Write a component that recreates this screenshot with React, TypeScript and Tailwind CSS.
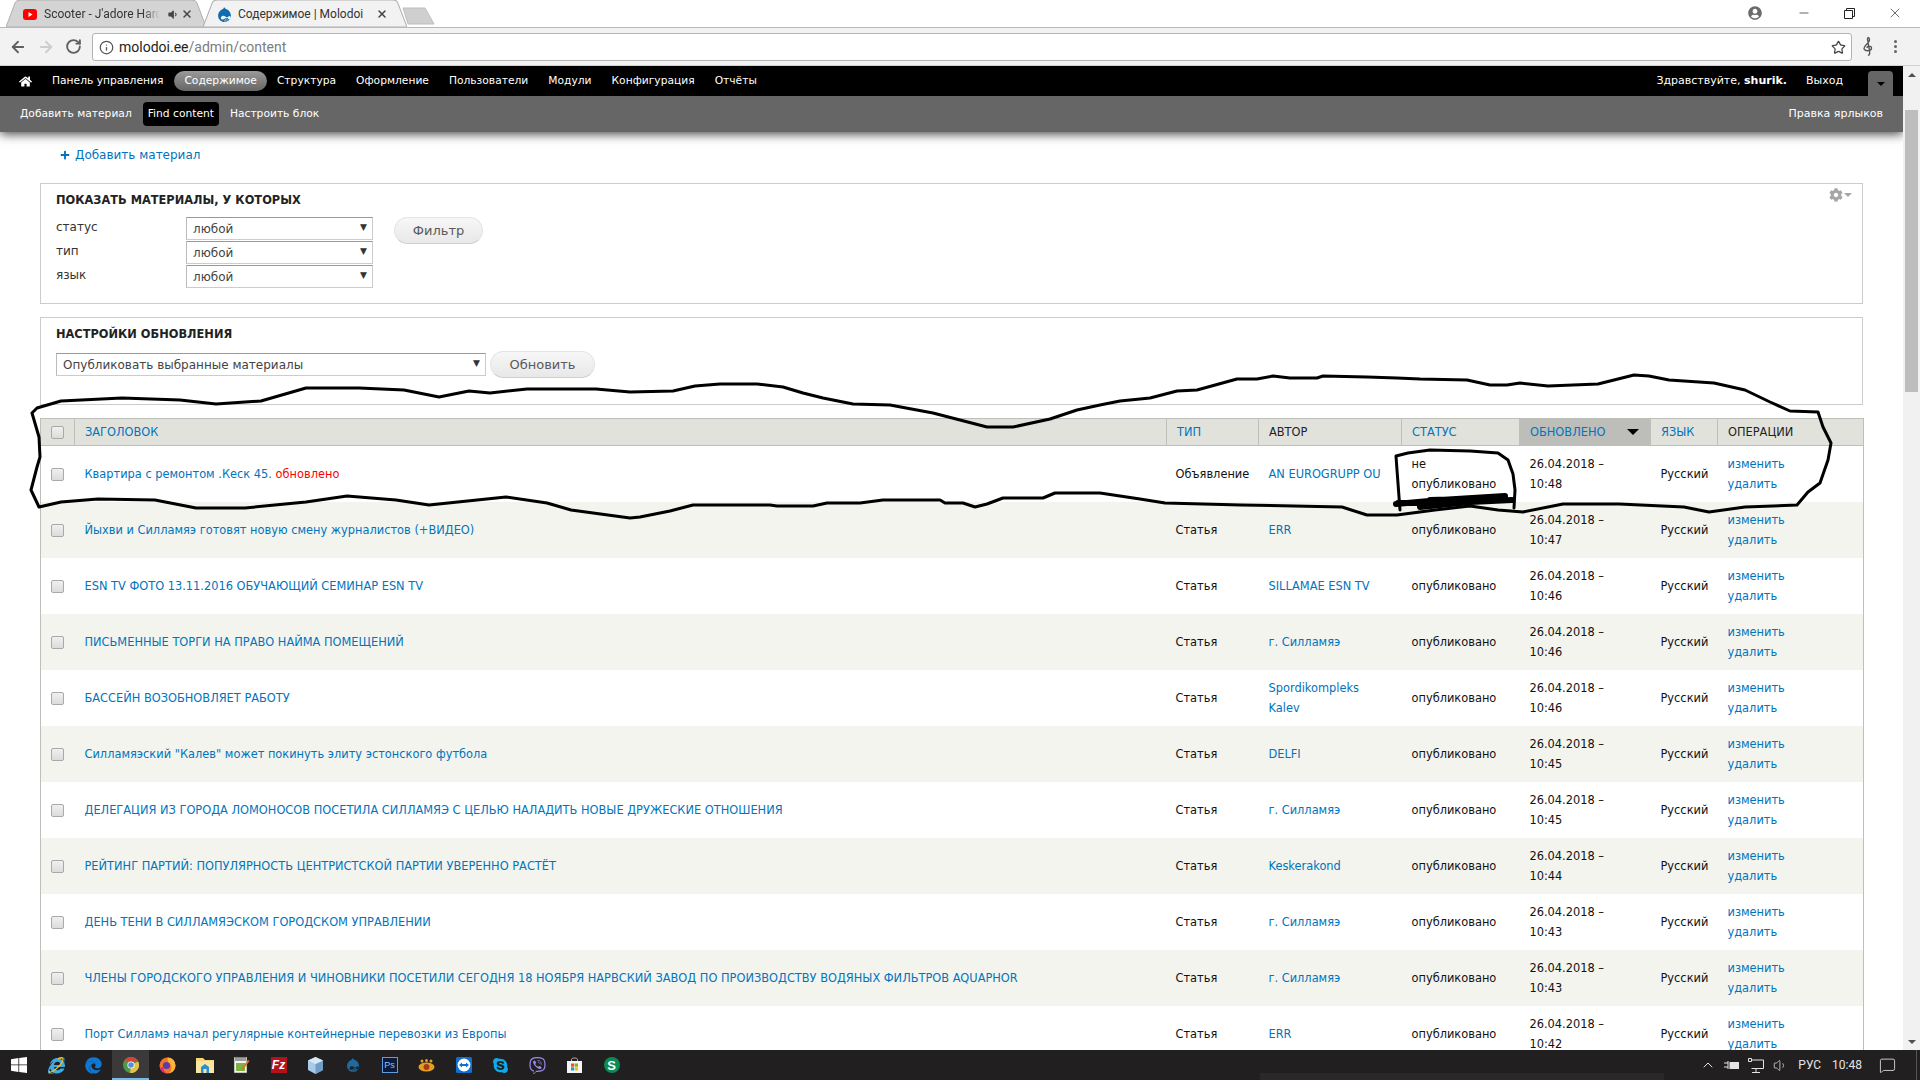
import React from 'react';
import { ArrowLeft, ArrowRight, RotateCw, Info, Star, X, Minus, ChevronUp, Volume1, MessageSquare } from 'lucide-react';
import { FaHome, FaPlus, FaCog, FaUserCircle, FaVolumeDown, FaInternetExplorer, FaEdge, FaDrupal, FaSkype, FaViber } from 'react-icons/fa';

const rows = [
  { title: 'Квартира с ремонтом .Кеск 45.', fresh: true, type: 'Объявление', author: 'AN EUROGRUPP OU', time: '10:48', off: true },
  { title: 'Йыхви и Силламяэ готовят новую смену журналистов (+ВИДЕО)', type: 'Статья', author: 'ERR', time: '10:47' },
  { title: 'ESN TV ФОТО 13.11.2016 ОБУЧАЮЩИЙ СЕМИНАР ESN TV', type: 'Статья', author: 'SILLAMAE ESN TV', time: '10:46' },
  { title: 'ПИСЬМЕННЫЕ ТОРГИ НА ПРАВО НАЙМА ПОМЕЩЕНИЙ', type: 'Статья', author: 'г. Силламяэ', time: '10:46' },
  { title: 'БАССЕЙН ВОЗОБНОВЛЯЕТ РАБОТУ', type: 'Статья', author: 'Spordikompleks Kalev', time: '10:46' },
  { title: 'Силламяэский "Калев" может покинуть элиту эстонского футбола', type: 'Статья', author: 'DELFI', time: '10:45' },
  { title: 'ДЕЛЕГАЦИЯ ИЗ ГОРОДА ЛОМОНОСОВ ПОСЕТИЛА СИЛЛАМЯЭ С ЦЕЛЬЮ НАЛАДИТЬ НОВЫЕ ДРУЖЕСКИЕ ОТНОШЕНИЯ', type: 'Статья', author: 'г. Силламяэ', time: '10:45' },
  { title: 'РЕЙТИНГ ПАРТИЙ: ПОПУЛЯРНОСТЬ ЦЕНТРИСТСКОЙ ПАРТИИ УВЕРЕННО РАСТЁТ', type: 'Статья', author: 'Keskerakond', time: '10:44' },
  { title: 'ДЕНЬ ТЕНИ В СИЛЛАМЯЭСКОМ ГОРОДСКОМ УПРАВЛЕНИИ', type: 'Статья', author: 'г. Силламяэ', time: '10:43' },
  { title: 'ЧЛЕНЫ ГОРОДСКОГО УПРАВЛЕНИЯ И ЧИНОВНИКИ ПОСЕТИЛИ СЕГОДНЯ 18 НОЯБРЯ НАРВСКИЙ ЗАВОД ПО ПРОИЗВОДСТВУ ВОДЯНЫХ ФИЛЬТРОВ AQUAPHOR', type: 'Статья', author: 'г. Силламяэ', time: '10:43' },
  { title: 'Порт Силламэ начал регулярные контейнерные перевозки из Европы', type: 'Статья', author: 'ERR', time: '10:42' },
];

const navItems = ['Оформление', 'Пользователи', 'Модули', 'Конфигурация', 'Отчёты'];

const Checkbox = () => (
  <span className="block w-[13px] h-[13px] rounded-[2px] border border-[#a9a9a9] bg-gradient-to-b from-[#f0f0f0] to-[#dcdcdc]" />
);

const FakeSelect = ({ text, width }: { text: string; width: string }) => (
  <div className={`${width} h-[23px] border border-[#ccc] border-t-[#999] border-l-[#bbb] bg-white flex items-center justify-between pl-[6px] pr-[5px] text-[12px] text-[#444]`}>
    <span>{text}</span>
    <span className="text-[9px] text-[#333] leading-none -mt-[3px]">▼</span>
  </div>
);

const PillButton = ({ text, width }: { text: string; width: string }) => (
  <div className={`${width} h-[27px] rounded-[14px] border border-[#e4e4e4] border-b-[#cfcfcf] bg-gradient-to-b from-[#f7f7f7] to-[#e8e8e8] flex items-center justify-center text-[13px] text-[#5a5a5a]`}>
    {text}
  </div>
);

const TabShape = ({ fill, stroke }: { fill: string; stroke: string }) => (
  <svg className="absolute inset-0 w-full h-full" viewBox="0 0 200 28" preserveAspectRatio="none">
    <path d="M0 28 L9 4 Q10 1 14 1 L186 1 Q190 1 191 4 L200 28 Z" fill={fill} stroke={stroke} strokeWidth="1" />
  </svg>
);

const ChromeBar = () => (
  <div className="bg-white">
    {/* tab strip */}
    <div className="h-[28px] flex items-end relative border-b border-[#b9b9b9] pl-[6px] font-['Roboto',sans-serif] text-[12px] text-[#333]">
      <div className="relative w-[200px] h-[28px] flex items-center pl-[17px] pt-[2px]">
        <TabShape fill="#d4d4d4" stroke="#b0b0b0" />
        <svg className="relative" width="14" height="11" viewBox="0 0 14 11">
          <rect width="14" height="11" rx="3" fill="#ff0000" />
          <path d="M5.5 3 L9.5 5.5 L5.5 8 Z" fill="#fff" />
        </svg>
        <span className="relative ml-[7px] w-[116px] whitespace-nowrap [mask-image:linear-gradient(to_right,#000_85%,transparent)]">Scooter - J'adore Harc</span>
        <FaVolumeDown className="relative ml-[7px] text-[#444]" size={11} />
        <X className="relative ml-[3px] text-[#444]" size={12} strokeWidth={3} />
      </div>
      <div className="relative w-[204px] h-[28px] -ml-[3px] flex items-center pl-[13px] pt-[2px]">
        <TabShape fill="#f2f2f2" stroke="#b0b0b0" />
        <FaDrupal className="relative text-[#0f6cb0]" size={17} />
        <span className="relative ml-[5px] w-[135px] whitespace-nowrap">Содержимое | Molodoi</span>
        <X className="relative ml-[3px] text-[#444]" size={12} strokeWidth={3} />
      </div>
      <svg className="absolute left-[402px] top-[7px]" width="34" height="18" viewBox="0 0 34 18">
        <path d="M1 1 L23 1 L32 17 L6 17 Z" fill="#cfcfcf" stroke="#bdbdbd" />
      </svg>
      <FaUserCircle className="absolute left-[1748px] top-[6px] text-[#6b6b6b]" size={14} />
      <Minus className="absolute left-[1797px] top-[6px] text-[#222]" size={14} strokeWidth={1.2} />
      <svg className="absolute left-[1844px] top-[8px]" width="11" height="11" viewBox="0 0 11 11" fill="none" stroke="#222">
        <path d="M0.5 2.5 H8.5 V10.5 H0.5 Z M2.5 2.5 V0.5 H10.5 V8.5 H8.5" />
      </svg>
      <X className="absolute left-[1887px] top-[5px] text-[#222]" size={16} strokeWidth={1} />
    </div>
    {/* toolbar */}
    <div className="h-[38px] bg-[#f2f2f2] border-b border-[#d0d0d0] flex items-center">
      <ArrowLeft className="ml-[9px] text-[#5f5f5f]" size={18} strokeWidth={2.4} />
      <ArrowRight className="ml-[10px] text-[#cdcdcd]" size={18} strokeWidth={2.4} />
      <RotateCw className="ml-[10px] text-[#5f5f5f]" size={17} strokeWidth={2.6} />
      <div className="ml-[10px] w-[1760px] h-[28px] bg-white border border-[#b4b4b4] rounded-[3px] flex items-center pl-[6px] pr-[5px] pt-px font-['Roboto',sans-serif] text-[14px]">
        <Info className="text-[#555]" size={15} strokeWidth={2} />
        <span className="ml-[5px] text-[#222]">molodoi.ee</span>
        <span className="text-[#7c7c7c]">/admin/content</span>
        <Star className="ml-auto text-[#444]" size={15} strokeWidth={2} />
      </div>
      <svg className="ml-[11px]" width="10" height="20" viewBox="0 0 10 20" fill="none" stroke="#555" strokeWidth="1.4">
        <path d="M5 18 C7 19 7 15 6 11 L4.5 2 C4.5 0 6.5 0 6.5 3 C6.5 6 1 8 1 11.5 C1 14.5 8.5 14.5 8.5 11 C8.5 8.5 4 8.5 4 11" />
      </svg>
      <div className="ml-[21px] flex flex-col gap-[2px]">
        <span className="w-[3px] h-[3px] rounded-full bg-[#666]" />
        <span className="w-[3px] h-[3px] rounded-full bg-[#666]" />
        <span className="w-[3px] h-[3px] rounded-full bg-[#666]" />
      </div>
    </div>
  </div>
);

const AdminBar = () => (
  <div className="relative text-white text-[10.7px]">
    <div className="h-[30px] bg-black flex items-center">
      <FaHome className="ml-[19px]" size={13} />
      <span className="ml-[20px] pt-px">Панель управления</span>
      <span className="ml-[11px] h-[20px] px-[10px] rounded-[10px] bg-gradient-to-b from-[#9a9a9a] to-[#666] flex items-center pt-px">Содержимое</span>
      <span className="ml-[10px] pt-px">Структура</span>
      {navItems.map((item) => (
        <span key={item} className="ml-[20px] pt-px">{item}</span>
      ))}
      <span className="ml-auto pt-px text-[11px]">Здравствуйте, <b>shurik.</b></span>
      <span className="ml-[19px] pt-px text-[11px]">Выход</span>
      <div className="ml-[25px] mr-[10px] mt-[5px] w-[25px] h-[25px] bg-[#666] rounded-t-[4px] flex items-center justify-center">
        <span className="w-0 h-0 border-x-[4px] border-x-transparent border-t-[4px] border-t-black" />
      </div>
    </div>
    <div className="h-[36px] bg-[#666] flex items-center pl-[20px] pr-[20px] shadow-[0_2px_10px_rgba(0,0,0,0.75)]">
      <span>Добавить материал</span>
      <span className="ml-[11px] h-[24px] px-[5px] bg-black rounded-[4px] flex items-center">Find content</span>
      <span className="ml-[11px]">Настроить блок</span>
      <span className="ml-auto text-[11px]">Правка ярлыков</span>
    </div>
  </div>
);

const Fieldset = ({ title, height, children }: { title: string; height: string; children: React.ReactNode }) => (
  <div className={`${height} relative border border-[#ccc] pl-[15px] pt-[8px]`}>
    <h2 className="text-[11.4px] leading-[16px] font-bold text-[#222]">{title}</h2>
    {children}
  </div>
);

const Th = ({ children, link, sorted }: { children: React.ReactNode; link?: boolean; sorted?: boolean }) => (
  <th className={`border-l border-[#bebfb9] px-[10px] pt-px font-normal text-left ${link ? 'text-[#0074bd]' : 'text-[#222]'} ${sorted ? 'bg-[#bdbeb9]' : ''}`}>
    {children}
  </th>
);

const ContentTable = () => (
  <table className="w-[1823px] table-fixed border-collapse border-x border-[#bebfb9] text-[11.4px]">
    <colgroup>
      <col className="w-[34px]" />
      <col className="w-[1092px]" />
      <col className="w-[92px]" />
      <col className="w-[143px]" />
      <col className="w-[118px]" />
      <col className="w-[131px]" />
      <col className="w-[67px]" />
      <col className="w-[146px]" />
    </colgroup>
    <thead>
      <tr className="h-[27px] bg-[#e1e2dc] border-y border-[#bebfb9]">
        <th className="pl-[10px]"><Checkbox /></th>
        <Th link>ЗАГОЛОВОК</Th>
        <Th link>ТИП</Th>
        <Th>АВТОР</Th>
        <Th link>СТАТУС</Th>
        <Th link sorted>
          <span className="flex items-center justify-between pr-[1px]">
            ОБНОВЛЕНО
            <span className="w-0 h-0 border-x-[6px] border-x-transparent border-t-[6px] border-t-black" />
          </span>
        </Th>
        <Th link>ЯЗЫК</Th>
        <Th>ОПЕРАЦИИ</Th>
      </tr>
    </thead>
    <tbody className="leading-[20px] text-[#111]">
      {rows.map((row, i) => (
        <tr key={i} className={`h-[56px] [&>td]:pt-px ${i % 2 === 1 ? 'bg-[#f3f4ee]' : 'bg-white'}`}>
          <td className="pl-[10px]"><Checkbox /></td>
          <td className="px-[10px]">
            <a className="text-[#0074bd]">{row.title}</a>
            {row.fresh && <span className="text-[#ff0000]"> обновлено</span>}
          </td>
          <td className="pl-[9px]">{row.type}</td>
          <td className="pl-[10px] pr-[20px] text-[#0074bd]">{row.author}</td>
          <td className="px-[10px]">{row.off ? <>не<br />опубликовано</> : 'опубликовано'}</td>
          <td className="px-[10px]">26.04.2018 –<br />{row.time}</td>
          <td className="px-[10px]">Русский</td>
          <td className="px-[10px] text-[#0074bd]">
            <div>изменить</div>
            <div>удалить</div>
          </td>
        </tr>
      ))}
    </tbody>
  </table>
);

const Scrollbar = () => (
  <div className="relative w-[17px] shrink-0 bg-[#f1f1f1] flex flex-col items-center">
    <span className="mt-[7px] w-0 h-0 border-x-[4px] border-x-transparent border-b-[4px] border-b-[#505050]" />
    <div className="absolute left-[2px] top-[44px] w-[13px] h-[282px] bg-[#bdbdbd]" />
    <span className="mt-auto mb-[6px] w-0 h-0 border-x-[4px] border-x-transparent border-t-[4px] border-t-[#505050]" />
  </div>
);

const TaskIcon = ({ children, active }: { children: React.ReactNode; active?: boolean }) => (
  <div className={`w-[37px] h-[30px] flex items-center justify-center ${active ? 'bg-[#3b393a] border-b-2 border-[#76b9ed] pt-[2px]' : ''}`}>
    {children}
  </div>
);

const Taskbar = () => (
  <div className="relative h-[30px] shrink-0 bg-[#221f20] flex items-center text-white">
    <div className="w-[38px] flex justify-center">
      <svg width="16" height="16" viewBox="0 0 16 16" fill="#fff">
        <path d="M0 2.2 L7.4 1.1 V7.5 H0 Z M8.2 1 L16 0 V7.5 H8.2 Z M0 8.3 H7.4 V14.9 L0 13.8 Z M8.2 8.3 H16 V16 L8.2 15 Z" />
      </svg>
    </div>
    <TaskIcon>
      <span className="relative flex">
        <FaInternetExplorer className="text-[#40a9e4]" size={17} />
        <svg className="absolute inset-0" width="17" height="17" viewBox="0 0 17 17" fill="none">
          <path d="M2 14 C0 16 3 16 8 12 C13 8 17 2 14 1 C12.5 .6 11 1.5 10 2" stroke="#f4c32e" strokeWidth="1.2" />
        </svg>
      </span>
    </TaskIcon>
    <TaskIcon><FaEdge className="text-[#0f78d4]" size={17} /></TaskIcon>
    <TaskIcon active>
      <svg width="16" height="16" viewBox="0 0 16 16">
        <circle cx="8" cy="8" r="8" fill="#4c9a49" />
        <path d="M8 0 A8 8 0 0 1 15.2 4.6 L8 4.6 Z M1.2 3.8 A8 8 0 0 1 8 0 L8 4.6 Z" fill="#d0463b" />
        <path d="M15.2 4.6 A8 8 0 0 1 7 16 L8 8 Z" fill="#e5c04a" />
        <circle cx="8" cy="8" r="3.6" fill="#fff" />
        <circle cx="8" cy="8" r="2.8" fill="#5a8fd8" />
      </svg>
    </TaskIcon>
    <TaskIcon>
      <svg width="17" height="17" viewBox="0 0 17 17">
        <circle cx="8.5" cy="8.5" r="8" fill="#f0762a" />
        <path d="M8.5 .5 A8 8 0 0 1 16.5 8.5 A8 8 0 0 1 10 16.4 C14 13 13 7 9 5 Z" fill="#fcb43a" />
        <circle cx="7.5" cy="8.5" r="3.6" fill="#5b3fa8" />
        <path d="M1 11 A8 8 0 0 0 8 16.5 C5 15 4 12 4.5 10 Z" fill="#e0247a" />
      </svg>
    </TaskIcon>
    <TaskIcon>
      <svg width="18" height="16" viewBox="0 0 18 16">
        <path d="M0 1 H7 L9 3 H18 V16 H0 Z" fill="#f6d77a" />
        <path d="M0 4 H18 V16 H0 Z" fill="#fbe6a1" />
        <path d="M5 16 V10 L9 7 L13 10 V16 H10.5 V12 H7.5 V16 Z" fill="#2a8fd4" />
      </svg>
    </TaskIcon>
    <TaskIcon>
      <svg width="17" height="18" viewBox="0 0 17 18">
        <rect x="1" y="1" width="13" height="16" fill="#f4f4f0" stroke="#333" strokeWidth=".5" />
        <rect x="3" y="7" width="9" height="8" fill="#7cb342" />
        <path d="M2 2 H13 M2 4 H13" stroke="#444" />
        <path d="M8 13 L15 4 L16.5 5 L10 14 Z" fill="#d4782a" />
      </svg>
    </TaskIcon>
    <TaskIcon>
      <div className="w-[16px] h-[16px] bg-[#b3121d] flex items-center justify-center font-['Liberation_Sans',sans-serif] italic font-bold text-[12px] leading-none">Fz</div>
    </TaskIcon>
    <TaskIcon>
      <svg width="15" height="17" viewBox="0 0 15 17">
        <path d="M7.5 0 L15 3.5 V13 L7.5 17 L0 13 V3.5 Z" fill="#a9cbe8" />
        <path d="M7.5 7 L15 3.5 V13 L7.5 17 Z" fill="#6f9fc8" />
        <path d="M7.5 7 L0 3.5 L7.5 0 L15 3.5 Z" fill="#d8e8f4" />
      </svg>
    </TaskIcon>
    <TaskIcon><FaDrupal className="text-[#22699e]" size={16} /></TaskIcon>
    <TaskIcon>
      <div className="w-[16px] h-[16px] bg-[#0c1a3c] border border-[#5f9dde] flex items-center justify-center font-['Liberation_Sans',sans-serif] text-[9px] leading-none text-[#8fc1f0]">Ps</div>
    </TaskIcon>
    <TaskIcon>
      <svg width="17" height="13" viewBox="0 0 17 13">
        <ellipse cx="8.5" cy="8" rx="8" ry="4.5" fill="#e4a11f" />
        <circle cx="8.5" cy="8" r="3" fill="#a63a1d" />
        <circle cx="4" cy="2" r="1.5" fill="#e4a11f" />
        <circle cx="8.5" cy="1.5" r="1.5" fill="#e4a11f" />
        <circle cx="13" cy="2" r="1.5" fill="#e4a11f" />
      </svg>
    </TaskIcon>
    <TaskIcon>
      <svg width="16" height="16" viewBox="0 0 16 16">
        <rect width="16" height="16" rx="1.5" fill="#0e70d1" />
        <circle cx="8" cy="8" r="6.4" fill="#fff" />
        <path d="M3 8 L6 5.6 V7 H10 V5.6 L13 8 L10 10.4 V9 H6 V10.4 Z" fill="#0e70d1" />
      </svg>
    </TaskIcon>
    <TaskIcon><FaSkype className="text-[#11a9e6]" size={17} /></TaskIcon>
    <TaskIcon><FaViber className="text-[#9b8ae6]" size={17} /></TaskIcon>
    <TaskIcon>
      <svg width="15" height="16" viewBox="0 0 15 16">
        <path d="M4.5 4 V2.5 C4.5 .5 10.5 .5 10.5 2.5 V4" fill="none" stroke="#bbb" />
        <rect y="4" width="15" height="12" fill="#f5f5f5" />
        <rect x="4" y="6.5" width="3.2" height="3.2" fill="#e8532b" />
        <rect x="7.8" y="6.5" width="3.2" height="3.2" fill="#7fba00" />
        <rect x="4" y="10.3" width="3.2" height="3.2" fill="#00a4ef" />
        <rect x="7.8" y="10.3" width="3.2" height="3.2" fill="#ffb900" />
      </svg>
    </TaskIcon>
    <TaskIcon>
      <div className="w-[16px] h-[16px] rounded-full bg-[#0b8a55] flex items-center justify-center font-['Liberation_Sans',sans-serif] font-bold text-[13px] leading-none">S</div>
    </TaskIcon>
    <div className="absolute left-[1260px] top-[23px] w-[404px] h-[7px] bg-[#2b2829]" />
    <div className="ml-auto flex items-center font-['Roboto',sans-serif] text-[12px] text-[#e4e4e4]">
      <ChevronUp size={16} strokeWidth={1.5} />
      <svg className="ml-[8px]" width="15" height="11" viewBox="0 0 15 11" fill="none" stroke="#e4e4e4">
        <path d="M0 3 H4 M0 7 H4 M4 1 V9" />
        <rect x="6" y="2.5" width="8.5" height="6" fill="#e4e4e4" />
      </svg>
      <svg className="ml-[9px]" width="16" height="15" viewBox="0 0 16 15" fill="none" stroke="#e4e4e4">
        <path d="M.5 .5 H3.5 V3.5 H.5 Z M3.5 2 H15.5 V10.5 H3.5 M8 10.5 V14 M4 14.5 H12" />
      </svg>
      <Volume1 className="ml-[9px]" size={15} strokeWidth={1.2} />
      <span className="ml-[10px]">РУС</span>
      <span className="ml-[11px]">10:48</span>
      <MessageSquare className="ml-[17px] mr-[24px]" size={17} strokeWidth={1.2} />
    </div>
    <div className="absolute right-[3px] top-0 w-px h-full bg-[#555]" />
  </div>
);

// the pen marks somebody drew over the screenshot
const loopPath =
  'M32 413 L37 408 L61 401 L122 398 L180 400 L216 404 L261 401 L306 388 L359 388 L404 390 L439 397 L469 391 L490 393 L527 389 L596 389 L630 392 L673 391 L695 386 L720 384 L757 384 L783 387 L803 393 L823 398 L853 404 L890 405 L933 413 L987 427 L1013 427 L1050 419 L1077 410 L1100 405 L1120 401 L1150 398 L1177 391 L1197 390 L1237 379 L1257 379 L1273 376 L1290 378 L1317 378 L1323 376 L1367 377 L1397 378 L1420 379 L1467 380 L1490 385 L1507 385 L1520 383 L1548 386 L1598 384 L1634 375 L1649 376 L1669 380 L1714 383 L1745 390 L1770 402 L1790 411 L1818 412 L1823 427 L1831 443 L1828 460 L1820 483 L1808 492 L1797 505 L1745 507 L1709 512 L1684 507 L1619 504 L1563 504 L1523 512 L1498 510 L1470 506 L1435 510 L1397 515 L1367 515 L1342 507 L1241 505 L1165 503 L1140 499 L1100 493 L1055 493 L1043 498 L1003 498 L987 504 L975 507 L963 503 L945 503 L940 500 L883 500 L860 503 L827 503 L813 506 L777 506 L770 505 L693 505 L670 511 L640 517 L630 518 L571 510 L547 503 L506 497 L429 505 L396 500 L347 496 L306 502 L245 508 L196 508 L155 500 L98 499 L61 502 L39 507 L31 490 L37 467 L40 457 L39 437 L32 413';

const Marks = () => (
  <svg className="absolute left-0 top-0 pointer-events-none" width="1920" height="1080" viewBox="0 0 1920 1080" fill="none" stroke="#000" strokeLinejoin="round" strokeLinecap="round">
    <path d={loopPath} strokeWidth="3" />
    <path d="M1400 510 L1397 470 L1396 456 L1408 453 L1430 450 L1470 451 L1498 453 L1508 460 L1513 474 L1515 490 L1514 508" strokeWidth="3" />
    <path d="M1396 504 L1440 500 L1505 496 M1398 503 L1450 503 L1512 500 M1420 507 L1480 501 M1430 500 L1500 498" strokeWidth="6" />
  </svg>
);

const App = () => {
  return (
    <div className="relative h-[1080px] w-[1920px] overflow-hidden flex flex-col bg-white font-['DejaVu_Sans',sans-serif]">
      <ChromeBar />
      <div className="flex flex-1 min-h-0">
        <div className="flex-1 min-w-0 overflow-hidden flex flex-col">
          <AdminBar />
          <div className="pl-10 pr-[40px]">
            <div className="h-[51px] pt-[13px]">
              <div className="pl-[20px] h-[20px] flex items-center text-[12px] text-[#0074bd]">
                <FaPlus size={10} className="mr-[5px]" />
                Добавить материал
              </div>
            </div>
            <Fieldset title="ПОКАЗАТЬ МАТЕРИАЛЫ, У КОТОРЫХ" height="h-[121px]">
              <div className="mt-[9px] flex items-start">
                <div className="flex flex-col gap-px">
                  {['статус', 'тип', 'язык'].map((label) => (
                    <div key={label} className="flex items-center text-[12px] text-[#333]">
                      <span className="w-[130px] -mt-[3px]">{label}</span>
                      <FakeSelect text="любой" width="w-[187px]" />
                    </div>
                  ))}
                </div>
                <div className="ml-[21px]"><PillButton text="Фильтр" width="w-[89px]" /></div>
              </div>
              <div className="absolute right-[10px] top-[4px] flex items-center text-[#a6a6a6]">
                <FaCog size={14} />
                <span className="ml-[1px] w-0 h-0 border-x-[4px] border-x-transparent border-t-[4px] border-t-[#a6a6a6]" />
              </div>
            </Fieldset>
            <div className="mt-[13px]">
              <Fieldset title="НАСТРОЙКИ ОБНОВЛЕНИЯ" height="h-[88px]">
                <div className="mt-[9px] flex items-center gap-[4px]">
                  <FakeSelect text="Опубликовать выбранные материалы" width="w-[430px]" />
                  <PillButton text="Обновить" width="w-[105px]" />
                </div>
              </Fieldset>
            </div>
            <div className="mt-[13px]">
              <ContentTable />
            </div>
          </div>
        </div>
        <Scrollbar />
      </div>
      <Taskbar />
      <Marks />
    </div>
  );
};

export default App;
